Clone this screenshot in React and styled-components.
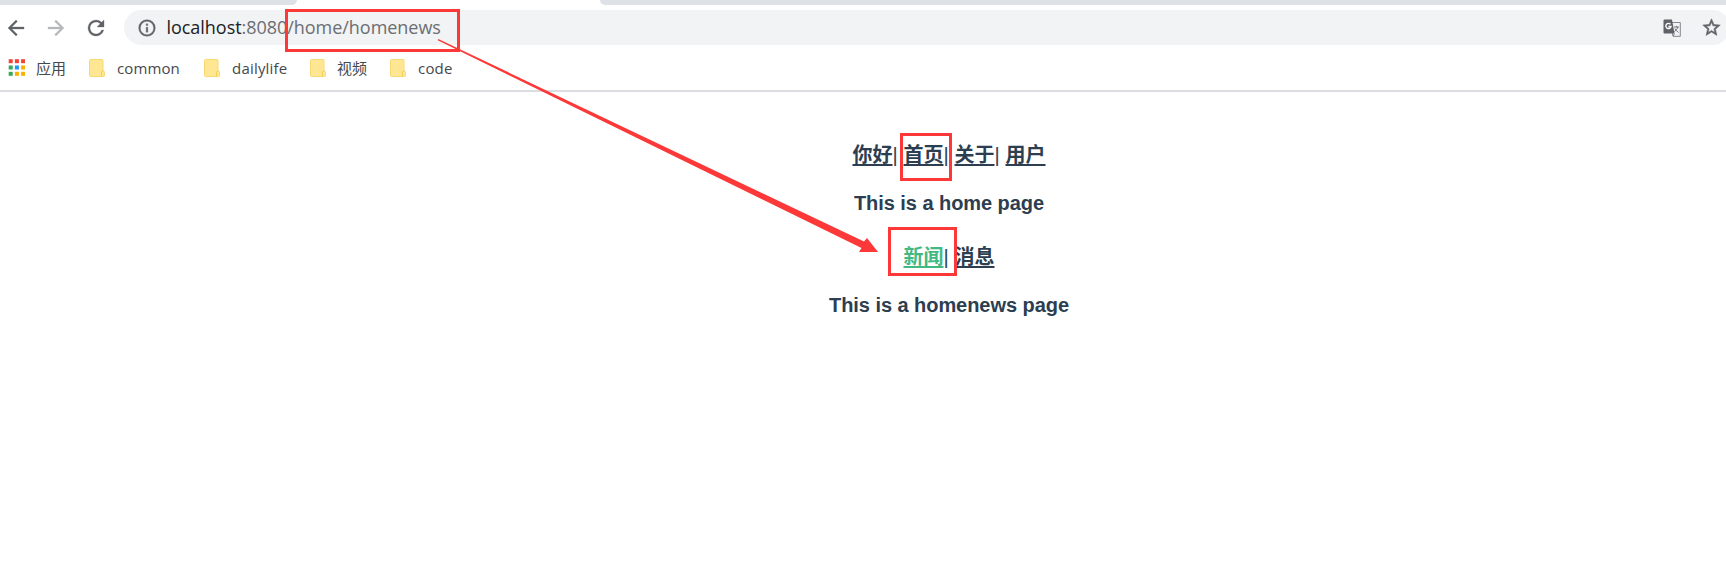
import React from "react";
import styled, { createGlobalStyle } from "styled-components";

const Global = createGlobalStyle`
  * { box-sizing: border-box; }
  body { margin: 0; background: #fff; overflow: hidden; }
`;
const ui = `"Open Sans", "Noto Sans", "Noto Sans CJK SC", sans-serif`;

const Page = styled.div`
  position: relative;
  width: 1726px;
  height: 570px;
  overflow: hidden;
  background: #fff;
`;
const TabStrip = styled.div`
  display: flex;
  justify-content: space-between;
  height: 5px;
`;
const TabEdge = styled.div`
  width: ${(p) => p.$w}px;
  background: #dee1e6;
  border-radius: ${(p) => (p.$left ? "0 0 6px 0" : "0 0 0 6px")};
`;
const Toolbar = styled.div`
  display: flex;
  align-items: center;
  height: 45px;
  padding-left: 4px;
`;
const NavButton = styled.span`
  display: flex;
  width: 24px;
  height: 24px;
  margin-right: 16px;
  opacity: ${(p) => (p.$disabled ? 0.45 : 1)};
`;
const Omnibox = styled.div`
  flex: none;
  display: flex;
  align-items: center;
  width: 1606px;
  height: 35px;
  padding-left: 12.5px;
  border-radius: 18px;
  background: #f1f3f4;
`;
const Url = styled.div`
  margin-left: 10px;
  flex: 1;
  font: 18px/35px ${ui};
  letter-spacing: -0.04px;
  color: #6b6e72;
  white-space: nowrap;
`;
const Host = styled.span`
  color: #202124;
`;
const Actions = styled.div`
  display: flex;
  align-items: center;
  gap: 20px;
  margin-right: 8px;
`;
const Bookmarks = styled.div`
  display: flex;
  align-items: center;
  height: 42px;
  padding: 0 0 5px 8px;
  border-bottom: 2px solid #dcdde2;
`;
const Bookmark = styled.div`
  flex: none;
  display: flex;
  align-items: center;
  width: ${(p) => p.$w}px;
  gap: ${(p) => p.$gap || 12}px;
  font: 15px/20px ${ui};
  letter-spacing: ${(p) => p.$spacing || 0}px;
  color: #45484c;
  white-space: nowrap;
`;
const Content = styled.main`
  width: 1726px;
  padding-top: 48px;
  padding-left: 172px;
  text-align: center;
  color: #2c3e50;
  font-family: "Liberation Sans", "Noto Sans CJK SC", sans-serif;
`;
const Links = styled.nav`
  display: flex;
  justify-content: center;
  height: 30px;
  font-size: 20px;
  line-height: 30px;
`;
const Link = styled.span`
  font-weight: 700;
  color: ${(p) => (p.$active ? "#42b983" : "#2c3e50")};
  text-decoration: underline;
  text-decoration-thickness: 2px;
  text-underline-offset: 2px;
`;
const Divider = styled.span`
  width: 11px;
  text-align: left;
`;
const Title = styled.h3`
  margin: ${(p) => p.$margin};
  font-size: 20px;
  line-height: 24px;
  font-weight: 700;
  letter-spacing: -0.05px;
`;
const Mark = styled.div`
  position: absolute;
  left: ${(p) => p.$x}px;
  top: ${(p) => p.$y}px;
  width: ${(p) => p.$w}px;
  height: ${(p) => p.$h}px;
  border: 3px solid #fd3838;
`;
const ArrowLayer = styled.svg`
  position: absolute;
  left: 0;
  top: 0;
`;

const Glyph = ({ d, size = 24, color = "#5f6368", weight = 0 }) => (
  <svg width={size} height={size} viewBox="0 0 24 24" fill={color} stroke={color} strokeWidth={weight}>
    <path d={d} />
  </svg>
);
const BACK = "M20 11H7.83l5.59-5.59L12 4l-8 8 8 8 1.41-1.41L7.83 13H20v-2z";
const FORWARD = "M12 4l-1.41 1.41L16.17 11H4v2h12.17l-5.58 5.59L12 20l8-8z";
const RELOAD = "M17.65 6.35A7.96 7.96 0 0 0 12 4a8 8 0 1 0 7.73 10h-2.08A6 6 0 1 1 12 6c1.66 0 3.14.69 4.22 1.78L13 11h7V4l-2.35 2.35z";
const INFO = "M11 7h2v2h-2V7zm0 4h2v6h-2v-6zm1-9a10 10 0 1 0 0 20 10 10 0 0 0 0-20zm0 18a8 8 0 1 1 0-16 8 8 0 0 1 0 16z";
const STAR = "M22 9.24l-7.19-.62L12 2 9.19 8.63 2 9.24l5.46 4.73L5.82 21 12 17.27 18.18 21l-1.63-7.03L22 9.24zM12 15.4l-3.76 2.27 1-4.28-3.32-2.88 4.38-.38L12 6.1l1.71 4.04 4.38.38-3.32 2.88 1 4.28L12 15.4z";

const Apps = () => (
  <svg width="17" height="17" viewBox="0 0 17 17">
    {["#f44336", "#f44336", "#f44336", "#34a853", "#2196f3", "#fbaf00", "#34a853", "#fbaf00", "#fbaf00"].map((c, i) => (
      <rect key={i} x={0.7 + (i % 3) * 6.2} y={0.2 + Math.floor(i / 3) * 6.3} width="4" height="4" fill={c} />
    ))}
  </svg>
);
const Folder = () => (
  <svg width="16" height="18" viewBox="0 0 16 18">
    <path d="M1.5.5H13q1 0 1 1V11.500q1.500.5 1.500 2v3q0 1-1 1h-13q-1 0-1-1v-15q0-1 1-1z" fill="#ffe693" stroke="#f7d972" />
    <path d="M12.500 17.200V13.500q0-1.500 1.500-1.500" fill="none" stroke="#f3cf55" />
  </svg>
);
const Translate = () => (
  <svg width="18" height="18" viewBox="0 0 18 18">
    <path d="M8 3.500h9.300v13.800H10z" fill="#f1f3f4" stroke="#85888c" />
    <path d="M1.500.5H9l2.500 14H1.500Q.5 14.500.5 13.500V1.500q0-1 1-1z" fill="#5f6368" />
    <path d="M7.400 5.200a2.600 2.600 0 1 0 .6 2.300H5.400" fill="none" stroke="#fff" strokeWidth="1.400" />
    <path d="M11 8h5M13.500 6.800V8m1.300 0q-.6 3-3.500 4.600M12 9.500q1 2 3.500 4M10 17l1.500-2.500" fill="none" stroke="#74777b" />
  </svg>
);

export default function App() {
  return (
    <Page>
      <Global />
      <TabStrip>
        <TabEdge $w={297} $left />
        <TabEdge $w={1126} />
      </TabStrip>
      <Toolbar>
        <NavButton><Glyph d={BACK} weight={0.3} /></NavButton>
        <NavButton $disabled><Glyph d={FORWARD} weight={0.3} /></NavButton>
        <NavButton><Glyph d={RELOAD} weight={0.3} /></NavButton>
        <Omnibox>
          <Glyph d={INFO} size={20} weight={0.4} />
          <Url><Host>localhost</Host>:8080/home/homenews</Url>
          <Actions>
            <Translate />
            <Glyph d={STAR} size={21} weight={0.6} />
          </Actions>
        </Omnibox>
      </Toolbar>
      <Bookmarks>
        <Bookmark $w={81} $gap={11}><Apps />应用</Bookmark>
        <Bookmark $w={115} $spacing={0.1}><Folder />common</Bookmark>
        <Bookmark $w={106} $spacing={0.2}><Folder />dailylife</Bookmark>
        <Bookmark $w={80} $gap={11}><Folder />视频</Bookmark>
        <Bookmark $w={80} $spacing={0.2}><Folder />code</Bookmark>
      </Bookmarks>
      <Content>
        <Links>
          <Link>你好</Link><Divider>|</Divider>
          <Link>首页</Link><Divider>|</Divider>
          <Link>关于</Link><Divider>|</Divider>
          <Link>用户</Link>
        </Links>
        <Title $margin="21px 0 27px">This is a home page</Title>
        <Links>
          <Link $active>新闻</Link><Divider>|</Divider>
          <Link>消息</Link>
        </Links>
        <Title $margin="21px 0 0">This is a homenews page</Title>
      </Content>
      <Mark $x={285} $y={9} $w={175} $h={43} />
      <Mark $x={900} $y={133} $w={52} $h={48} />
      <Mark $x={888} $y={227} $w={69} $h={49} />
      <ArrowLayer width="1726" height="570">
        <path d="M438.300 39L864 241.500L867 238L878 252L859 252L861.500 248L437.700 40.200Z" fill="#fd3838" />
      </ArrowLayer>
    </Page>
  );
}
